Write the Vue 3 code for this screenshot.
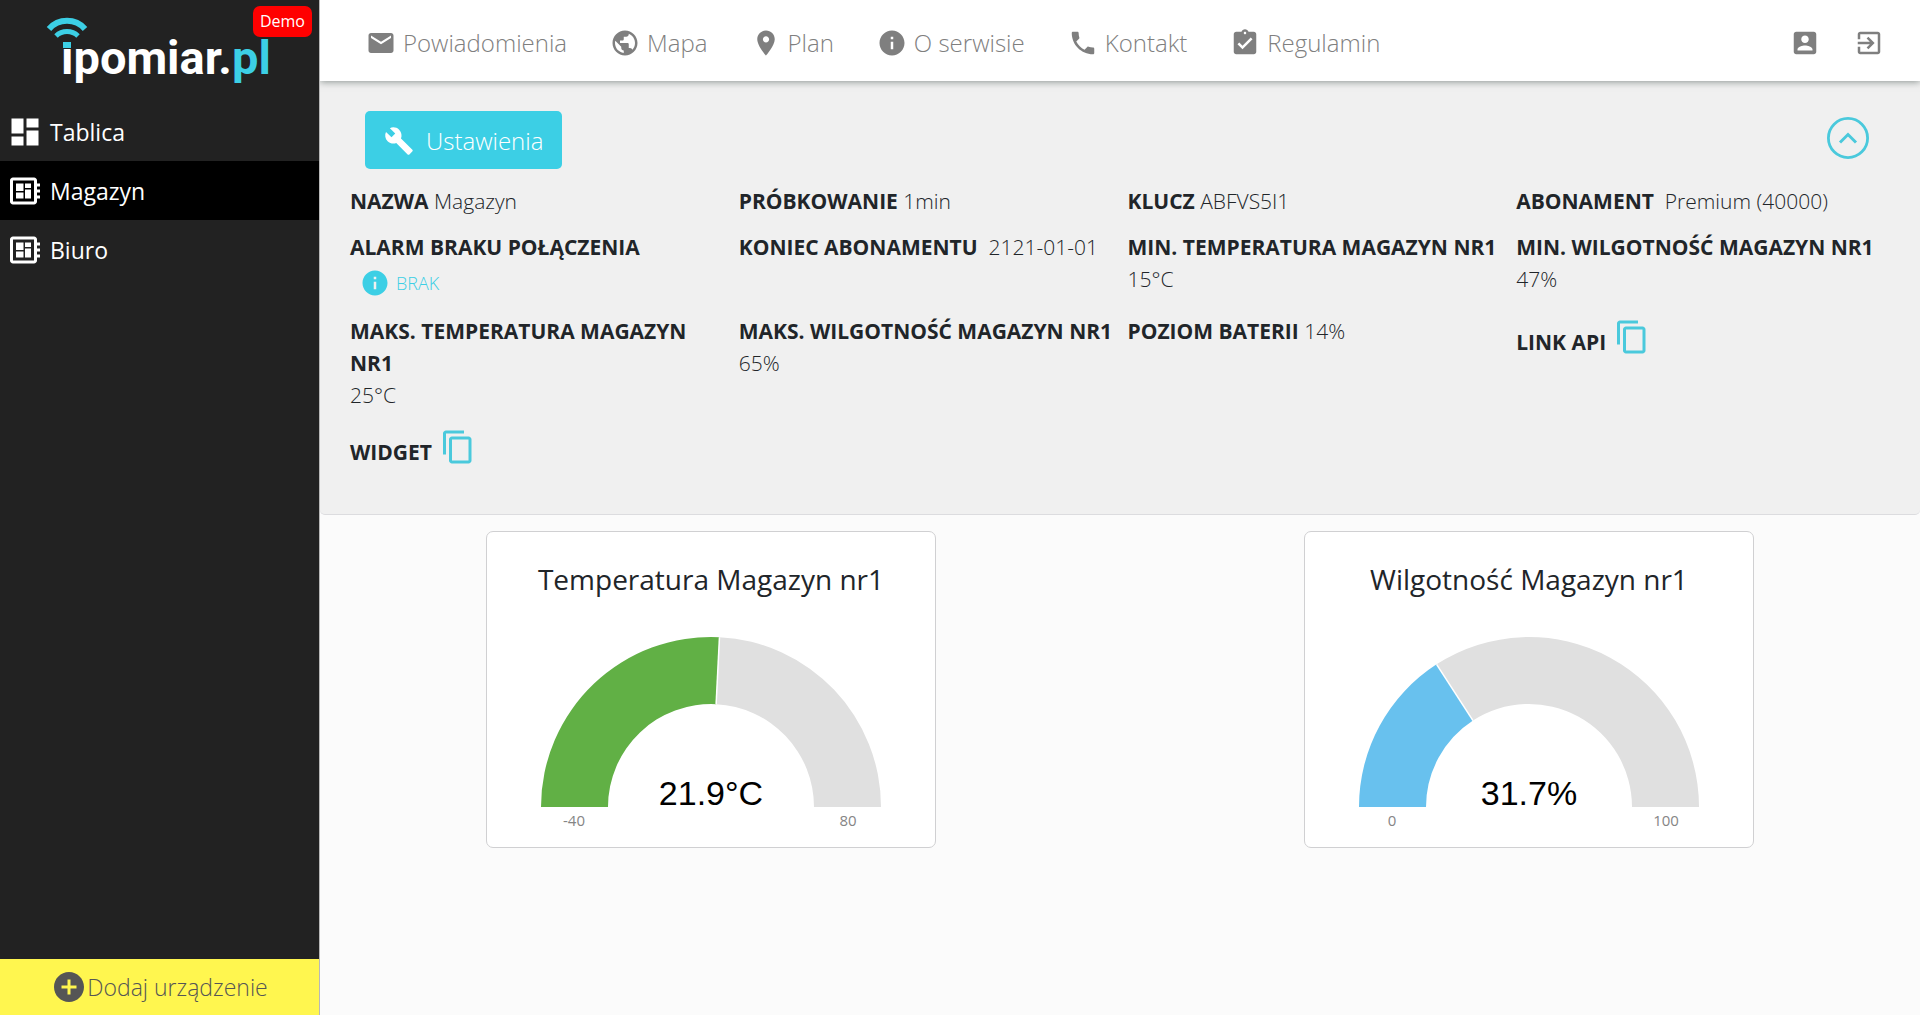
<script setup>
import { ref } from 'vue'

const icons = {
  mail: 'M20 4H4c-1.1 0-1.99.9-1.99 2L2 18c0 1.1.9 2 2 2h16c1.1 0 2-.9 2-2V6c0-1.1-.9-2-2-2zm0 4l-8 5-8-5V6l8 5 8-5v2z',
  globe: 'M12 2C6.48 2 2 6.48 2 12s4.48 10 10 10 10-4.48 10-10S17.52 2 12 2zm-1 17.93c-3.95-.49-7-3.85-7-7.93 0-.62.08-1.21.21-1.79L9 15v1c0 1.1.9 2 2 2v1.93zm6.9-2.54c-.26-.81-1-1.39-1.9-1.39h-1v-3c0-.55-.45-1-1-1H8v-2h2c.55 0 1-.45 1-1V7h2c1.1 0 2-.9 2-2v-.41c2.93 1.19 5 4.06 5 7.41 0 2.08-.8 3.97-2.1 5.39z',
  place: 'M12 2C8.13 2 5 5.13 5 9c0 5.25 7 13 7 13s7-7.75 7-13c0-3.87-3.13-7-7-7zm0 9.5c-1.38 0-2.5-1.12-2.5-2.5s1.12-2.5 2.5-2.5 2.5 1.12 2.5 2.5-1.12 2.5-2.5 2.5z',
  info: 'M12 2C6.48 2 2 6.48 2 12s4.48 10 10 10 10-4.48 10-10S17.52 2 12 2zm1 15h-2v-6h2v6zm0-8h-2V7h2v2z',
  phone: 'M6.62 10.79c1.44 2.83 3.76 5.14 6.59 6.59l2.2-2.2c.27-.27.67-.36 1.02-.24 1.12.37 2.33.57 3.57.57.55 0 1 .45 1 1V20c0 .55-.45 1-1 1-9.39 0-17-7.61-17-17 0-.55.45-1 1-1h3.5c.55 0 1 .45 1 1 0 1.25.2 2.45.57 3.57.11.35.03.74-.25 1.02l-2.2 2.2z',
  rules: 'M19 3h-4.18C14.4 1.84 13.3 1 12 1c-1.3 0-2.4.84-2.82 2H5c-1.1 0-2 .9-2 2v14c0 1.1.9 2 2 2h14c1.1 0 2-.9 2-2V5c0-1.1-.9-2-2-2zm-7 0c.55 0 1 .45 1 1s-.45 1-1 1-1-.45-1-1 .45-1 1-1zm-2 14l-4-4 1.41-1.41L10 14.17l6.59-6.59L18 9l-8 8z',
  account: 'M3 5v14c0 1.1.89 2 2 2h14c1.1 0 2-.9 2-2V5c0-1.1-.9-2-2-2H5c-1.11 0-2 .9-2 2zm12 4c0 1.66-1.34 3-3 3s-3-1.34-3-3 1.34-3 3-3 3 1.34 3 3zm-9 8c0-2 4-3.1 6-3.1s6 1.1 6 3.1v1H6v-1z',
  exit: 'M10.09 15.59L11.5 17l5-5-5-5-1.41 1.41L12.67 11H3v2h9.67l-2.58 2.59zM19 3H5c-1.11 0-2 .9-2 2v4h2V5h14v14H5v-4H3v4c0 1.1.89 2 2 2h14c1.1 0 2-.9 2-2V5c0-1.1-.9-2-2-2z',
  wrench: 'M22.7 19l-9.1-9.1c.9-2.3.4-5-1.5-6.9-2-2-5-2.4-7.4-1.3L9 6 6 9 1.6 4.7C.4 7.1.9 10.1 2.9 12.1c1.9 1.9 4.6 2.4 6.9 1.5l9.1 9.1c.4.4 1 .4 1.4 0l2.3-2.3c.5-.4.5-1.1.1-1.4z',
  copy: 'M16 1H4c-1.1 0-2 .9-2 2v14h2V3h12V1zm3 4H8c-1.1 0-2 .9-2 2v14c0 1.1.9 2 2 2h11c1.1 0 2-.9 2-2V7c0-1.1-.9-2-2-2zm0 16H8V7h11v14z',
  dashboard: 'M3 13h8V3H3v10zm0 8h8v-6H3v6zm10 0h8V11h-8v10zm0-18v6h8V3h-8z',
  board: 'M22 9V7h-2V5c0-1.1-.9-2-2-2H4c-1.1 0-2 .9-2 2v14c0 1.1.9 2 2 2h14c1.1 0 2-.9 2-2v-2h2v-2h-2v-2h2v-2h-2V9h2zm-4 10H4V5h14v14zM6 13h5v4H6v-4zm6-6h4v3h-4V7zM6 7h5v5H6V7zm6 4h4v6h-4v-6z',
  add: 'M12 2C6.48 2 2 6.48 2 12s4.48 10 10 10 10-4.48 10-10S17.52 2 12 2zm5 11h-4v4h-2v-4H7v-2h4V7h2v4h4v2z',
}

const devices = [
  { name: 'Tablica', icon: 'dashboard' },
  { name: 'Magazyn', icon: 'board' },
  { name: 'Biuro', icon: 'board' },
]
const current = ref('Magazyn')

const menu = [
  { label: 'Powiadomienia', icon: 'mail' },
  { label: 'Mapa', icon: 'globe' },
  { label: 'Plan', icon: 'place' },
  { label: 'O serwisie', icon: 'info' },
  { label: 'Kontakt', icon: 'phone' },
  { label: 'Regulamin', icon: 'rules' },
]

const details = [
  { label: 'NAZWA', value: 'Magazyn' },
  { label: 'PRÓBKOWANIE', value: '1min' },
  { label: 'KLUCZ', value: 'ABFVS5I1' },
  { label: 'ABONAMENT', value: '\u00a0Premium (40000)' },
  { label: 'ALARM BRAKU POŁĄCZENIA', alarm: 'BRAK' },
  { label: 'KONIEC ABONAMENTU', value: '\u00a02121-01-01' },
  { label: 'MIN. TEMPERATURA MAGAZYN NR1', value: '15°C' },
  { label: 'MIN. WILGOTNOŚĆ MAGAZYN NR1', value: '47%' },
  { label: 'MAKS. TEMPERATURA MAGAZYN NR1', value: '25°C', block: true },
  { label: 'MAKS. WILGOTNOŚĆ MAGAZYN NR1', value: '65%' },
  { label: 'POZIOM BATERII', value: '14%' },
  { label: 'LINK API', copy: true },
  { label: 'WIDGET', copy: true },
]
const open = ref(true)

const gauges = [
  { title: 'Temperatura Magazyn nr1', value: 21.9, unit: '°C', min: -40, max: 80, color: '#61b045' },
  { title: 'Wilgotność Magazyn nr1', value: 31.7, unit: '%', min: 0, max: 100, color: '#68c1ee' },
]

const CX = 180
const CY = 172
const OUTER = 170
const INNER = 103

function point(radius, share) {
  const angle = Math.PI * (1 - share)
  return `${(CX + radius * Math.cos(angle)).toFixed(2)} ${(CY - radius * Math.sin(angle)).toFixed(2)}`
}
function arc(from, to) {
  return `M${point(OUTER, from)} A${OUTER} ${OUTER} 0 0 1 ${point(OUTER, to)} L${point(INNER, to)} A${INNER} ${INNER} 0 0 0 ${point(INNER, from)} Z`
}
function share(g) {
  return (g.value - g.min) / (g.max - g.min)
}
</script>

<template>
  <div class="app">
    <aside class="sidebar">
      <a class="logo" href="#" aria-label="ipomiar.pl">
        <svg width="320" height="96" viewBox="0 0 320 96">
          <text x="61" y="74" class="logo-text">ipomiar.<tspan fill="#3ccfe5">pl</tspan></text>
          <rect x="60" y="34" width="13" height="14" fill="#222" />
          <rect x="63" y="42" width="8" height="6" fill="#3ccfe5" />
          <g fill="none" stroke="#3ccfe5" stroke-width="6">
            <path d="M49 29 A24 24 0 0 1 85 29" />
            <path d="M56 36 A16 16 0 0 1 78 36" stroke-width="5" />
          </g>
        </svg>
      </a>
      <span class="badge">Demo</span>
      <nav class="devices">
        <a
          v-for="d in devices"
          :key="d.name"
          href="#"
          class="device"
          :class="{ active: d.name === current }"
          @click.prevent="current = d.name"
        >
          <svg class="icon-lg" viewBox="0 0 24 24"><path :d="icons[d.icon]" /></svg>
          <span>{{ d.name }}</span>
        </a>
      </nav>
      <button class="add" type="button">
        <svg class="icon-lg" viewBox="0 0 24 24"><path :d="icons.add" /></svg>
        <span>Dodaj urządzenie</span>
      </button>
    </aside>

    <div class="content">
      <header class="topbar">
        <nav class="menu">
          <a v-for="m in menu" :key="m.label" href="#" class="menu-item">
            <svg class="icon" viewBox="0 0 24 24"><path :d="icons[m.icon]" /></svg>
            <span>{{ m.label }}</span>
          </a>
        </nav>
        <div class="account">
          <a href="#" aria-label="Konto"><svg class="icon" viewBox="0 0 24 24"><path :d="icons.account" /></svg></a>
          <a href="#" aria-label="Wyloguj"><svg class="icon" viewBox="0 0 24 24"><path :d="icons.exit" /></svg></a>
        </div>
      </header>

      <section class="panel">
        <div class="panel-head">
          <button class="settings" type="button">
            <svg class="icon" viewBox="0 0 24 24"><path :d="icons.wrench" /></svg>
            <span>Ustawienia</span>
          </button>
          <button class="toggle" type="button" aria-label="Zwiń" @click="open = !open">
            <svg width="42" height="42" viewBox="0 0 42 42" fill="none" stroke="#4ac9dc">
              <circle cx="21" cy="21" r="19.6" stroke-width="2.8" />
              <path d="M13 25.5 L21 17.5 L29 25.5" stroke-width="3" />
            </svg>
          </button>
        </div>
        <dl v-if="open" class="details">
          <div v-for="d in details" :key="d.label" class="detail" :class="{ 'with-copy': d.copy }">
            <dt>{{ d.label }}</dt>
            {{ ' ' }}
            <dd v-if="d.value" :class="{ block: d.block }">{{ d.value }}</dd>
            <dd v-else-if="d.alarm" class="alarm">
              <svg class="icon" viewBox="0 0 24 24"><path :d="icons.info" /></svg>
              <span>{{ d.alarm }}</span>
            </dd>
            <dd v-else class="copy">
              <button type="button" aria-label="Kopiuj">
                <svg class="icon-lg" viewBox="0 0 24 24"><path :d="icons.copy" /></svg>
              </button>
            </dd>
          </div>
        </dl>
      </section>

      <main class="gauges">
        <article v-for="g in gauges" :key="g.title" class="card">
          <h2>{{ g.title }}</h2>
          <svg class="gauge" width="360" height="212" viewBox="0 0 360 212">
            <path :d="arc(0, share(g))" :fill="g.color" />
            <path :d="arc(share(g), 1)" fill="#e0e0e0" />
            <path :d="`M${point(OUTER, share(g))} L${point(INNER, share(g))}`" stroke="#fff" stroke-width="1.5" />
            <text x="180" y="170" class="reading">{{ g.value }}{{ g.unit }}</text>
            <text x="43" y="191" class="limit">{{ g.min }}</text>
            <text x="317" y="191" class="limit">{{ g.max }}</text>
          </svg>
        </article>
      </main>
    </div>
  </div>
</template>

<style>
body {
  margin: 0;
}
</style>

<style scoped>
.app {
  display: flex;
  min-height: 100vh;
  background: #fbfbfb;
  color: #212529;
  font-family: 'Open Sans', 'Noto Sans', sans-serif;
  font-size: 24px;
  line-height: 32px;
}
.app * {
  box-sizing: border-box;
}
a {
  color: inherit;
  text-decoration: none;
}
button {
  padding: 0;
  border: 0;
  background: none;
  color: inherit;
  font: inherit;
  cursor: pointer;
}
svg {
  display: block;
  flex: none;
}
.icon {
  width: 30px;
  height: 30px;
  fill: currentColor;
}
.icon-lg {
  width: 36px;
  height: 36px;
  fill: currentColor;
}

.sidebar {
  position: relative;
  display: flex;
  flex-direction: column;
  flex: none;
  width: calc(100% / 6);
  overflow: hidden;
  border-right: 1px solid #b8b8b8;
  background: #222;
  color: #fff;
  font-size: 23px;
}
.logo {
  height: 102px;
}
.logo-text {
  fill: #fff;
  font-family: Roboto, sans-serif;
  font-size: 47px;
  font-weight: 700;
}
.badge {
  position: absolute;
  top: 6px;
  right: 7px;
  padding: 0 7px;
  border-radius: 7px;
  background: #f00;
  font-size: 16px;
  line-height: 31px;
}
.devices {
  flex: 1;
}
.device {
  display: flex;
  align-items: center;
  gap: 7px;
  height: 59px;
  padding-left: 7px;
}
.device.active {
  background: #000;
}
.add {
  display: flex;
  align-items: center;
  justify-content: center;
  height: 56px;
  background: #fff64f;
  color: #555;
  font-weight: 300;
}

.content {
  flex: 1;
  min-width: 0;
  overflow: hidden;
}
.topbar {
  position: relative;
  display: flex;
  align-items: center;
  justify-content: space-between;
  height: 81px;
  padding: 5px 36px 0 46px;
  background: #fff;
  color: #7f7f7f;
  font-weight: 300;
  box-shadow: 0 1px 7px rgba(60, 75, 70, 0.55);
}
.menu {
  display: flex;
  gap: 43px;
}
.menu-item {
  display: flex;
  align-items: center;
  gap: 7px;
}
.account {
  display: flex;
  gap: 34px;
}

.panel {
  padding: 30px 15px 32px 30px;
  border-bottom: 1px solid #dcdcdf;
  border-radius: 0 0 5px 5px;
  background: #f0f0f0;
}
.panel-head {
  display: flex;
  align-items: flex-start;
  justify-content: space-between;
  padding: 0 36px 0 15px;
}
.settings {
  display: flex;
  align-items: center;
  gap: 12px;
  height: 58px;
  padding: 2px 19px 0;
  border-radius: 5px;
  background: #3ccfe5;
  color: #fff;
  font-weight: 300;
}
.toggle {
  margin-top: 6px;
}
.details {
  display: grid;
  grid-template-columns: repeat(4, 1fr);
  row-gap: 14px;
  margin: 16px 0 0;
  padding-bottom: 14px;
  font-size: 21px;
}
.detail {
  padding-right: 10px;
}
dt,
dd {
  display: inline;
  margin: 0;
}
dt {
  font-weight: 700;
}
dd {
  font-weight: 300;
}
.block {
  display: block;
}
.alarm {
  display: flex;
  align-items: center;
  gap: 6px;
  height: 38px;
  padding: 2px 0 0 10px;
  color: #3ccfe5;
  font-size: 18px;
}
.with-copy {
  display: flex;
  align-items: flex-end;
  align-self: start;
  gap: 8px;
  padding: 4px 0 3px;
}
.with-copy dt {
  margin-bottom: -3px;
}
.copy {
  color: #4ac9dc;
}
.copy button {
  display: block;
}

.gauges {
  display: grid;
  grid-template-columns: 1fr 1fr;
  justify-items: center;
  margin: 16px -18px;
}
.card {
  display: flex;
  flex-direction: column;
  align-items: center;
  width: 450px;
  padding-top: 27px;
  border: 1px solid #d0d0d2;
  border-radius: 7px;
  background: #fff;
}
h2 {
  margin: 0 0 36px;
  font-size: 28px;
  font-weight: 400;
  line-height: 40px;
}
.reading {
  font-family: 'Liberation Sans', Arial, sans-serif;
  font-size: 34px;
  text-anchor: middle;
}
.limit {
  fill: #858585;
  font-size: 15px;
  text-anchor: middle;
}
</style>
